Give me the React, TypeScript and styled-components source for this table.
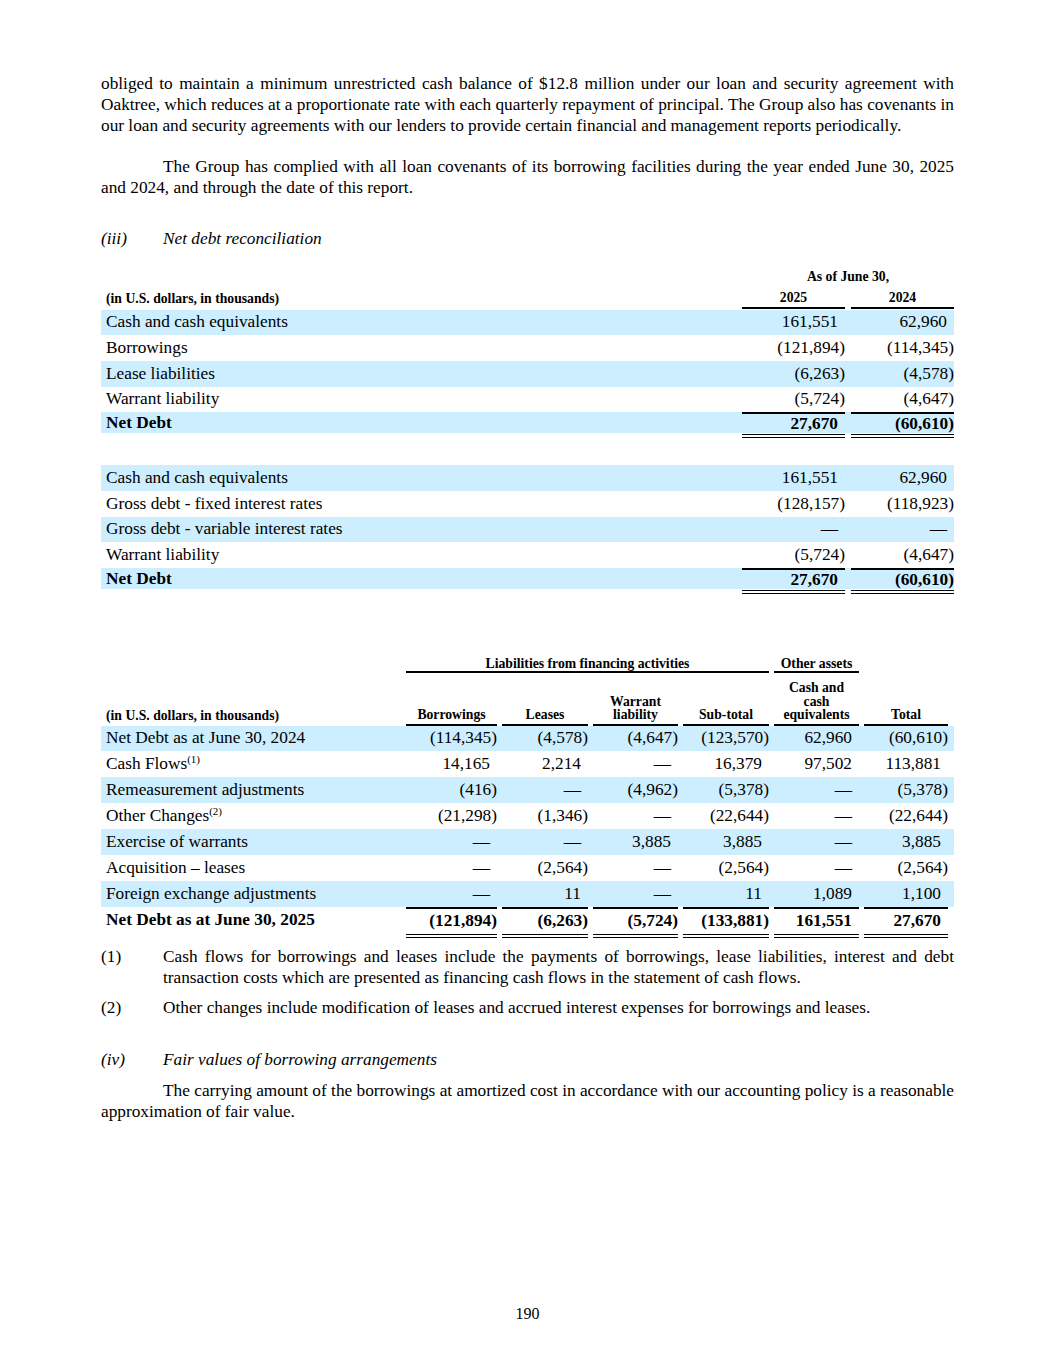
import React from "react";
import styled, { createGlobalStyle, css } from "styled-components";

const GlobalStyle = createGlobalStyle`
  html, body { margin: 0; padding: 0; background: #fff; }
  body { font-family: "Liberation Serif", "Times New Roman", serif; color: #000; }
`;

const SHADE = "#cceeff";
const FS = "17.3px";

const Page = styled.div`
  width: 1055px;
  min-height: 1365px;
  box-sizing: border-box;
  padding: 73px 101px 0;
  display: flex;
  flex-direction: column;
`;

const Para = styled.p<{ $indent?: boolean; $mt?: number }>`
  margin: ${(p) => p.$mt ?? 0}px 0 0;
  font-size: ${FS};
  line-height: 21px;
  text-align: justify;
  text-indent: ${(p) => (p.$indent ? "62px" : "0")};
`;

const SectionHead = styled.div<{ $mt: number }>`
  display: flex;
  margin-top: ${(p) => p.$mt}px;
  font-style: italic;
  font-size: ${FS};
  line-height: 21px;
`;

const Marker = styled.span`
  width: 62px;
  flex: none;
`;

const Footnote = styled.div<{ $mt: number }>`
  display: flex;
  margin-top: ${(p) => p.$mt}px;
  font-size: ${FS};
  line-height: 21px;
`;

const FootText = styled.span`
  flex: 1;
  text-align: justify;
`;

/* ---------- Table 1 ---------- */
const t1Cols = css`
  display: grid;
  grid-template-columns: 1fr 103px 103px;
  column-gap: 6px;
`;

const T1Table = styled.div<{ $mt: number }>`
  margin-top: ${(p) => p.$mt}px;
  display: flex;
  flex-direction: column;
`;

const HeadText = css`
  font-weight: bold;
  font-size: 13.7px;
  line-height: 14px;
`;

const T1Group = styled.div`
  ${t1Cols};
  ${HeadText};
  margin-bottom: 7px;
`;

const GroupTitle = styled.div<{ $span: string; $rule?: boolean }>`
  grid-column: ${(p) => p.$span};
  text-align: center;
  white-space: nowrap;
  border-bottom: ${(p) => (p.$rule ? "2px solid #000" : "none")};
`;

const T1Head = styled.div`
  ${t1Cols};
  ${HeadText};
  align-items: end;
`;

const HeadLabel = styled.div`
  padding-left: 5px;
  padding-bottom: 3px;
  white-space: nowrap;
`;

const ColHead = styled.div`
  text-align: center;
  padding-bottom: 2px;
  border-bottom: 2px solid #000;
  line-height: 13.5px;
  white-space: nowrap;
`;

const T1Row = styled.div<{ $shade?: boolean; $h: number; $total?: boolean }>`
  ${t1Cols};
  height: ${(p) => p.$h}px;
  background: ${(p) => (p.$shade ? SHADE : "transparent")};
  font-size: ${FS};
  font-weight: ${(p) => (p.$total ? "bold" : "normal")};
`;

const Label = styled.div`
  display: flex;
  align-items: center;
  padding-left: 5px;
  white-space: nowrap;
`;

const Num = styled.div<{ $pad: boolean; $top?: boolean }>`
  display: flex;
  align-items: center;
  justify-content: flex-end;
  padding-right: ${(p) => (p.$pad ? 7 : 0)}px;
  border-top: ${(p) => (p.$top ? "2px solid #000" : "none")};
  white-space: nowrap;
`;

const T1Rule = styled.div`
  ${t1Cols};
  margin-top: 1px;
  height: 4px;
`;

const DoubleLine = styled.div`
  border-top: 4px double #000;
`;

/* ---------- Table 2 ---------- */
const t2Cols = css`
  display: grid;
  grid-template-columns: 1fr 91px 86px 85px 86px 85px 84px;
  column-gap: 5px;
  padding-right: 6px;
`;

const T2Table = styled.div<{ $mt: number }>`
  margin-top: ${(p) => p.$mt}px;
  display: flex;
  flex-direction: column;
`;

const T2Group = styled.div`
  ${t2Cols};
  ${HeadText};
  margin-bottom: 8px;
`;

const T2Head = styled.div`
  ${t2Cols};
  ${HeadText};
  align-items: end;
`;

const T2Row = styled.div<{ $shade?: boolean; $h: number; $total?: boolean }>`
  ${t2Cols};
  height: ${(p) => p.$h}px;
  background: ${(p) => (p.$shade ? SHADE : "transparent")};
  font-size: ${FS};
  font-weight: ${(p) => (p.$total ? "bold" : "normal")};
`;

const T2Rule = styled.div`
  ${t2Cols};
  margin-top: 1px;
  height: 4px;
`;

const Sup = styled.sup`
  font-size: 11px;
  line-height: 0;
  vertical-align: 6px;
`;

const PageNum = styled.div`
  margin-top: 181px;
  text-align: center;
  font-size: 16px;
  line-height: 21px;
`;

const isPad = (v: string) => !v.startsWith("(");

type R1 = { label: string; a: string; b: string; shade?: boolean };

const t1a: R1[] = [
  { label: "Cash and cash equivalents", a: "161,551", b: "62,960", shade: true },
  { label: "Borrowings", a: "(121,894)", b: "(114,345)" },
  { label: "Lease liabilities", a: "(6,263)", b: "(4,578)", shade: true },
  { label: "Warrant liability", a: "(5,724)", b: "(4,647)" },
];

const t1b: R1[] = [
  { label: "Cash and cash equivalents", a: "161,551", b: "62,960", shade: true },
  { label: "Gross debt - fixed interest rates", a: "(128,157)", b: "(118,923)" },
  { label: "Gross debt - variable interest rates", a: "—", b: "—", shade: true },
  { label: "Warrant liability", a: "(5,724)", b: "(4,647)" },
];

type R2 = { label: React.ReactNode; v: string[]; shade?: boolean };

const t2: R2[] = [
  { label: "Net Debt as at June 30, 2024", v: ["(114,345)", "(4,578)", "(4,647)", "(123,570)", "62,960", "(60,610)"], shade: true },
  { label: <>Cash Flows<Sup>(1)</Sup></>, v: ["14,165", "2,214", "—", "16,379", "97,502", "113,881"] },
  { label: "Remeasurement adjustments", v: ["(416)", "—", "(4,962)", "(5,378)", "—", "(5,378)"], shade: true },
  { label: <>Other Changes<Sup>(2)</Sup></>, v: ["(21,298)", "(1,346)", "—", "(22,644)", "—", "(22,644)"] },
  { label: "Exercise of warrants", v: ["—", "—", "3,885", "3,885", "—", "3,885"], shade: true },
  { label: "Acquisition – leases", v: ["—", "(2,564)", "—", "(2,564)", "—", "(2,564)"] },
  { label: "Foreign exchange adjustments", v: ["—", "11", "—", "11", "1,089", "1,100"], shade: true },
];

const t2Total = ["(121,894)", "(6,263)", "(5,724)", "(133,881)", "161,551", "27,670"];

const T1Block: React.FC<{ rows: R1[]; total: [string, string]; mt: number }> = ({ rows, total, mt }) => (
  <T1Table $mt={mt}>
    {rows.map((r, i) => (
      <T1Row key={i} $shade={r.shade} $h={25.7}>
        <Label><span>{r.label}</span></Label>
        <Num $pad={isPad(r.a)}>{r.a}</Num>
        <Num $pad={isPad(r.b)}>{r.b}</Num>
      </T1Row>
    ))}
    <T1Row $shade $h={21} $total>
      <Label><span>Net Debt</span></Label>
      <Num $pad={isPad(total[0])} $top>{total[0]}</Num>
      <Num $pad={isPad(total[1])} $top>{total[1]}</Num>
    </T1Row>
    <T1Rule>
      <div />
      <DoubleLine />
      <DoubleLine />
    </T1Rule>
  </T1Table>
);

export default function App() {
  return (
    <>
      <GlobalStyle />
      <Page>
        <Para>
          obliged to maintain a minimum unrestricted cash balance of $12.8 million under our loan and security
          agreement with Oaktree, which reduces at a proportionate rate with each quarterly repayment of principal.
          The Group also has covenants in our loan and security agreements with our lenders to provide certain
          financial and management reports periodically.
        </Para>
        <Para $indent $mt={20}>
          The Group has complied with all loan covenants of its borrowing facilities during the year ended June 30,
          2025 and 2024, and through the date of this report.
        </Para>

        <SectionHead $mt={30}>
          <Marker>(iii)</Marker>
          <span>Net debt reconciliation</span>
        </SectionHead>

        <T1Table $mt={21}>
          <T1Group>
            <GroupTitle $span="2 / 4">As of June 30,</GroupTitle>
          </T1Group>
          <T1Head>
            <HeadLabel>(in U.S. dollars, in thousands)</HeadLabel>
            <ColHead>2025</ColHead>
            <ColHead>2024</ColHead>
          </T1Head>
        </T1Table>
        <T1Block rows={t1a} total={["27,670", "(60,610)"]} mt={1} />
        <T1Block rows={t1b} total={["27,670", "(60,610)"]} mt={27} />

        <T2Table $mt={63}>
          <T2Group>
            <GroupTitle $span="2 / 6" $rule>Liabilities from financing activities</GroupTitle>
            <GroupTitle $span="6 / 7" $rule>Other assets</GroupTitle>
          </T2Group>
          <T2Head>
            <HeadLabel>(in U.S. dollars, in thousands)</HeadLabel>
            <ColHead>Borrowings</ColHead>
            <ColHead>Leases</ColHead>
            <ColHead>Warrant<br />liability</ColHead>
            <ColHead>Sub-total</ColHead>
            <ColHead>Cash and<br />cash<br />equivalents</ColHead>
            <ColHead>Total</ColHead>
          </T2Head>
          {t2.map((r, i) => (
            <T2Row key={i} $shade={r.shade} $h={25.9}>
              <Label><span>{r.label}</span></Label>
              {r.v.map((v, j) => (
                <Num key={j} $pad={isPad(v)}>{v}</Num>
              ))}
            </T2Row>
          ))}
          <T2Row $h={26} $total>
            <Label><span>Net Debt as at June 30, 2025</span></Label>
            {t2Total.map((v, j) => (
              <Num key={j} $pad={isPad(v)} $top>{v}</Num>
            ))}
          </T2Row>
          <T2Rule>
            <div />
            {t2Total.map((_, j) => (
              <DoubleLine key={j} />
            ))}
          </T2Rule>
        </T2Table>

        <Footnote $mt={8}>
          <Marker>(1)</Marker>
          <FootText>
            Cash flows for borrowings and leases include the payments of borrowings, lease liabilities, interest and
            debt transaction costs which are presented as financing cash flows in the statement of cash flows.
          </FootText>
        </Footnote>
        <Footnote $mt={9}>
          <Marker>(2)</Marker>
          <FootText>
            Other changes include modification of leases and accrued interest expenses for borrowings and leases.
          </FootText>
        </Footnote>

        <SectionHead $mt={31}>
          <Marker>(iv)</Marker>
          <span>Fair values of borrowing arrangements</span>
        </SectionHead>
        <Para $indent $mt={10}>
          The carrying amount of the borrowings at amortized cost in accordance with our accounting policy is a
          reasonable approximation of fair value.
        </Para>

        <PageNum>190</PageNum>
      </Page>
    </>
  );
}
